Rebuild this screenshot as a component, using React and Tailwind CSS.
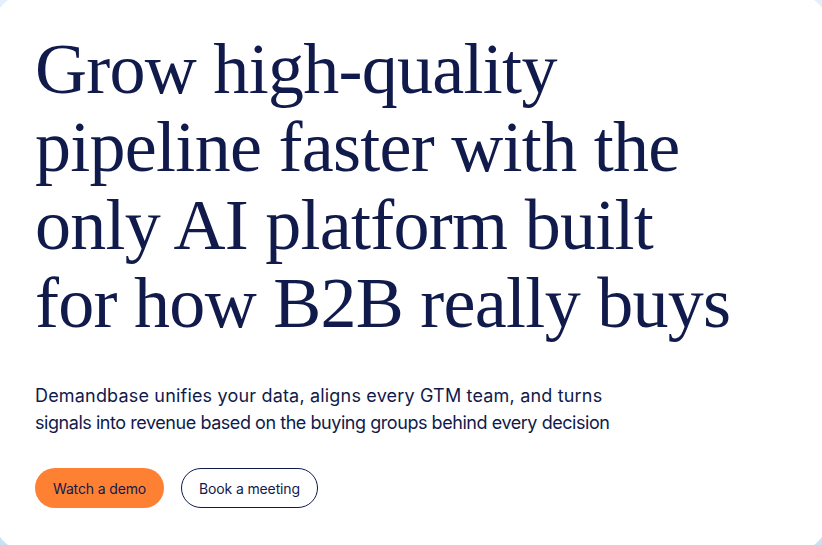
import React from 'react';

const App = () => {
    return (
        <div className="w-[822px] h-[545px] overflow-hidden bg-gradient-to-b from-[#e4effc] to-[#c4e2f6]">
            <div className="-m-2 h-[561px] bg-white rounded-[40px] pl-[43px] pt-[38px]">
                {/* Hero heading */}
                <h1
                    className="text-[72px] leading-[78px] tracking-[-0.01em] text-[#101a4b] font-normal"
                    style={{ fontFamily: '"Liberation Serif", serif' }}
                >
                    Grow high-quality<br />
                    pipeline faster with the<br />
                    only AI platform built<br />
                    for how B2B really buys
                </h1>

                <p
                    className="mt-[40px] text-[18px] leading-[27px] text-[#101a4b]"
                    style={{ fontFamily: 'Inter, sans-serif' }}
                >
                    <span className="tracking-[0.01em]">Demandbase unifies your data, aligns every GTM team, and turns</span><br />
                    <span className="tracking-[-0.025em]">signals into revenue based on the buying groups behind every decision</span>
                </p>

                <div className="mt-[32px] flex items-center gap-[17px]" style={{ fontFamily: 'Inter, sans-serif' }}>
                    <button className="h-10 w-[129px] rounded-full bg-[#fe8133] text-[14px] tracking-[-0.01em] text-[#101a4b]">
                        Watch a demo
                    </button>
                    <button className="h-10 w-[137px] rounded-full border border-[#101a4b] text-[14px] tracking-[-0.01em] text-[#101a4b]">
                        Book a meeting
                    </button>
                </div>
            </div>
        </div>
    );
};

export default App;
